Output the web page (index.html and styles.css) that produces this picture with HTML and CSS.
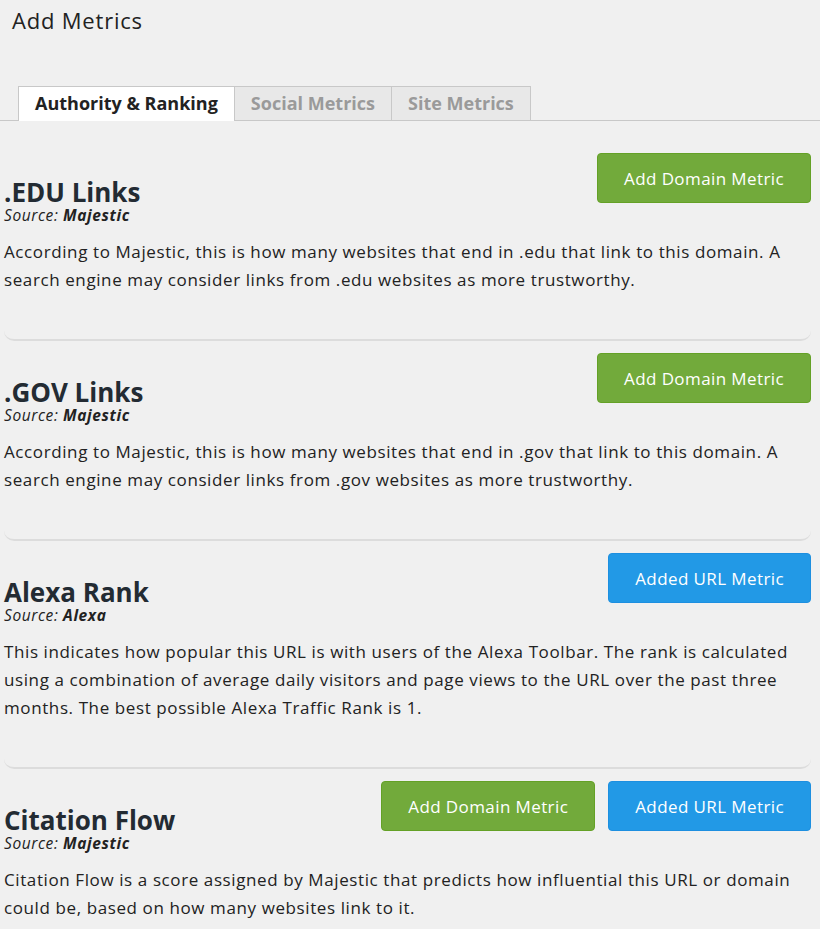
FILE: index.html
```html
<!DOCTYPE html>
<html lang="en">
<head>
    <meta charset="UTF-8">
    <title>Add Metrics</title>
    <link rel="stylesheet" href="styles.css">
</head>
<body>
    <h1 class="page-title">Add Metrics</h1>

    <ul class="tabs">
        <li class="tab active">Authority &amp; Ranking</li>
        <li class="tab">Social Metrics</li>
        <li class="tab">Site Metrics</li>
    </ul>

    <div class="metrics">
        <div class="metric">
            <div class="metric-head">
                <div class="metric-name">
                    <h3>.EDU Links</h3>
                    <div class="source">Source: <b>Majestic</b></div>
                </div>
                <div class="actions">
                    <button class="btn btn-domain">Add Domain Metric</button>
                </div>
            </div>
            <p>According to Majestic, this is how many websites that end in .edu that link to this domain. A search engine may consider links from .edu websites as more trustworthy.</p>
        </div>

        <div class="metric">
            <div class="metric-head">
                <div class="metric-name">
                    <h3>.GOV Links</h3>
                    <div class="source">Source: <b>Majestic</b></div>
                </div>
                <div class="actions">
                    <button class="btn btn-domain">Add Domain Metric</button>
                </div>
            </div>
            <p>According to Majestic, this is how many websites that end in .gov that link to this domain. A search engine may consider links from .gov websites as more trustworthy.</p>
        </div>

        <div class="metric">
            <div class="metric-head">
                <div class="metric-name">
                    <h3>Alexa Rank</h3>
                    <div class="source">Source: <b>Alexa</b></div>
                </div>
                <div class="actions">
                    <button class="btn btn-url">Added URL Metric</button>
                </div>
            </div>
            <p>This indicates how popular this URL is with users of the Alexa Toolbar. The rank is calculated using a combination of average daily visitors and page views to the URL over the past three months. The best possible Alexa Traffic Rank is 1.</p>
        </div>

        <div class="metric">
            <div class="metric-head">
                <div class="metric-name">
                    <h3>Citation Flow</h3>
                    <div class="source">Source: <b>Majestic</b></div>
                </div>
                <div class="actions">
                    <button class="btn btn-domain">Add Domain Metric</button>
                    <button class="btn btn-url">Added URL Metric</button>
                </div>
            </div>
            <p>Citation Flow is a score assigned by Majestic that predicts how influential this URL or domain could be, based on how many websites link to it.</p>
        </div>
    </div>
</body>
</html>
```

FILE: styles.css
```css
body {
    font-family: "Open Sans", Lato, sans-serif;
    background: #f0f0f0;
    color: #222;
    margin: 0;
    padding: 0;
}

.page-title {
    font-size: 22px;
    font-weight: normal;
    letter-spacing: 0.8px;
    line-height: 26px;
    margin: 0;
    padding: 7px 12px;
}

.tabs {
    list-style: none;
    margin: 46px 0 0;
    padding: 0 0 0 18px;
    display: flex;
    border-bottom: 1px solid #c8c8c8;
}

    .tabs .tab {
        padding: 0 16px;
        height: 33px;
        line-height: 33px;
        font-size: 18px;
        font-weight: bold;
        color: #9a9a9a;
        background: #e8e8e8;
        border: 1px solid #c8c8c8;
        border-bottom: none;
        margin-bottom: -1px;
    }

    .tabs .tab + .tab {
        border-left: none;
    }

    .tabs .tab.active {
        background: #fff;
        color: #222;
        height: 34px;
    }

.metrics {
    margin-top: 20px;
    padding: 0 9px 0 4px;
}

.metric {
    padding: 12px 0 45px;
    border-bottom: 2px solid #dcdcdc;
    border-radius: 10px;
}

.metric-head {
    display: flex;
    justify-content: space-between;
    align-items: flex-start;
}

.metric-name {
    padding-top: 24px;
}

    .metric-name h3 {
        margin: 0;
        font-size: 26px;
        line-height: 30px;
        color: #232b33;
    }

.source {
    font-style: italic;
    font-size: 15.5px;
    letter-spacing: 0.6px;
    line-height: 17px;
}

.actions {
    display: flex;
    gap: 13px;
}

.btn {
    font-family: inherit;
    font-size: 17px;
    letter-spacing: 0.4px;
    color: white;
    height: 50px;
    padding: 0 26px;
    border-radius: 4px;
    cursor: pointer;
}

.btn-domain {
    background: #72aa3b;
    border: 1px solid #64a126;
}

.btn-url {
    background: #2299e6;
    border: 1px solid #1d8fe0;
}

.metric p {
    margin: 14px 0 0;
    font-size: 17px;
    letter-spacing: 0.6px;
    line-height: 28px;
}
```
